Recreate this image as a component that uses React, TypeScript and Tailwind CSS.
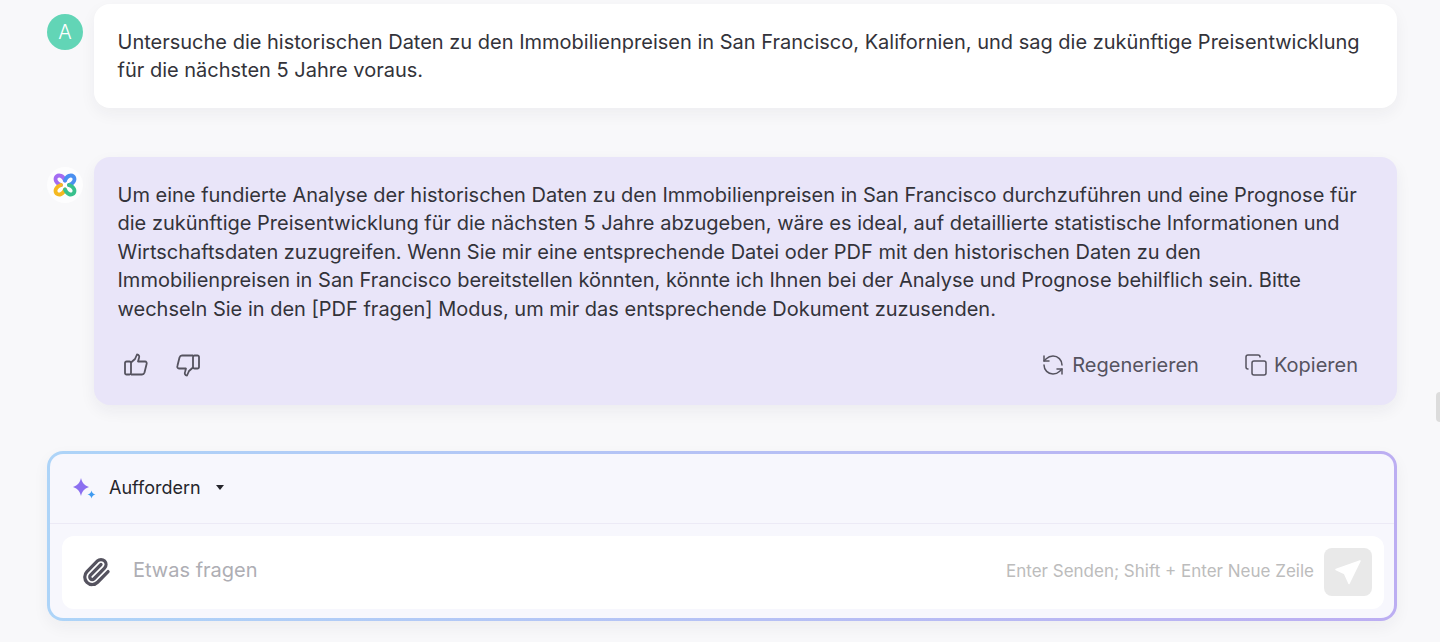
import { Copy, Paperclip, RefreshCcw } from "lucide-react";

function LogoMark() {
  return (
    <svg width="24" height="24" viewBox="0 0 24 24" fill="none" strokeWidth="3.8" strokeLinecap="round">
      <path d="M8 12 C2.5 10 1.5 6 3.5 3.5 C6 1.5 10 2.5 12 7.5" stroke="#a36cf2" />
      <path d="M12 7.5 C14 2.5 18 1.5 20.5 3.5 C22.5 6 21.5 10 16 12" stroke="#4a8ff0" />
      <path d="M8 12 C2.5 14 1.5 18 3.5 20.5 C6 22.5 10 21.5 12 16.5" stroke="#f5b921" />
      <path d="M16 12 C21.5 14 22.5 18 20.5 20.5 C18 22.5 14 21.5 12 16.5" stroke="#38c08c" />
    </svg>
  );
}

function Sparkles() {
  return (
    <svg width="24" height="24" viewBox="0 0 24 24">
      <path d="M9 2 C10 6.5 12 9.2 17 11 C12 12.8 10 15.5 9 20 C8 15.5 6 12.8 1 11 C6 9.2 8 6.5 9 2Z" fill="#8b6ff0" />
      <path d="M19.5 14.5 C20 16.8 21 17.8 23.5 18.5 C21 19.2 20 20.2 19.5 22.5 C19 20.2 18 19.2 15.5 18.5 C18 17.8 19 16.8 19.5 14.5Z" fill="#3f9bf0" />
    </svg>
  );
}

function SendIcon() {
  return (
    <svg width="28" height="28" viewBox="0 0 28 28">
      <path d="M26 3 L2 11.5 L10.5 15.5 L15 25.5 Z" fill="#ffffff" stroke="#ffffff" strokeWidth="1.5" strokeLinejoin="round" />
    </svg>
  );
}

function Thumb({ className }: { className?: string }) {
  return (
    <svg width="24" height="24" viewBox="0 0 24 24" fill="none" stroke="currentColor" strokeWidth="1.8" strokeLinejoin="round" className={className}>
      <rect x="1" y="8.5" width="6" height="13" rx="1.5" />
      <path d="M7 9.5 L11 6 L13 1.5 C15 1.5 15.6 3.5 15 5 L14 8.5 H21 C22.5 8.5 23 10 22.6 11 L20.5 19.5 C20 21 19 21.5 18 21.5 H7" />
    </svg>
  );
}

export default function App() {
  return (
    <div className="relative h-[642px] overflow-hidden bg-[#f8f8fa] pl-[47px] pr-[43px] pt-1 font-['Inter',sans-serif] text-[#33333a]">
      {/* question */}
      <div className="flex gap-[11px]">
        <div className="mt-2.5 flex h-9 w-9 shrink-0 items-center justify-center rounded-full bg-[#62d5b6] text-xl font-light text-white">
          A
        </div>
        <div className="h-[104px] flex-1 rounded-2xl bg-white pl-[23.5px] pr-6 pt-[23.5px] text-[20px] leading-[28.4px] shadow-[0_6px_16px_rgba(30,30,60,0.05)]">
          Untersuche die historischen Daten zu den Immobilienpreisen in San Francisco, Kalifornien, und sag die zukünftige Preisentwicklung für die nächsten 5 Jahre voraus.
        </div>
      </div>

      {/* answer */}
      <div className="mt-[49px] flex gap-[11px]">
        <div className="mt-[10px] flex h-9 w-9 shrink-0 items-center justify-center rounded-full bg-white/70">
          <LogoMark />
        </div>
        <div className="h-[248px] flex-1 rounded-2xl bg-[#e9e5f9] pl-[23.5px] pr-6 pt-[23.5px] shadow-[0_6px_16px_rgba(30,30,60,0.06)]">
          <p className="text-[20px] leading-[28.5px]">
            Um eine fundierte Analyse der historischen Daten zu den Immobilienpreisen in San Francisco durchzuführen und eine Prognose für die zukünftige Preisentwicklung für die nächsten 5 Jahre abzugeben, wäre es ideal, auf detaillierte statistische Informationen und Wirtschaftsdaten zuzugreifen. Wenn Sie mir eine entsprechende Datei oder PDF mit den historischen Daten zu den Immobilienpreisen in San Francisco bereitstellen könnten, könnte ich Ihnen bei der Analyse und Prognose behilflich sein. Bitte wechseln Sie in den [PDF fragen] Modus, um mir das entsprechende Dokument zuzusenden.
          </p>
          <div className="mt-[26.5px] flex items-center text-[#55535f]">
            <Thumb className="ml-1.5" />
            <Thumb className="ml-[28px] rotate-180" />
            <div className="ml-auto mr-[15px] flex items-center text-[20px]">
              <RefreshCcw size={24} strokeWidth={1.5} className="mr-[7px]" />
              <span>Regenerieren</span>
              <Copy size={24} strokeWidth={1.5} className="ml-[45px] mr-1.5" />
              <span>Kopieren</span>
            </div>
          </div>
        </div>
      </div>

      {/* input */}
      <div className="mt-[46px] h-[170px] rounded-2xl bg-gradient-to-r from-[#add4f8] to-[#bcaef2] p-[3px] shadow-[0_6px_16px_rgba(30,30,60,0.05)]">
        <div className="flex h-full flex-col rounded-[13px] bg-[#f7f7fd]">
          <div className="flex h-[70px] items-center border-b border-[#eceaf6] pb-0.5 pl-[22px]">
            <Sparkles />
            <span className="ml-[13px] text-lg text-[#25252b]">Auffordern</span>
            <span className="ml-[15px] h-0 w-0 border-x-[4.5px] border-t-[5px] border-x-transparent border-t-[#25252b]" />
          </div>
          <div className="ml-3 mr-[10px] mt-3 flex h-[73px] items-center rounded-xl bg-white pb-px pl-[19px] pr-3">
            <Paperclip size={30} strokeWidth={2.6} className="text-[#55535f]" />
            <span className="mb-1 ml-[22px] text-[20px] text-[#aeaeb4]">Etwas fragen</span>
            <span className="ml-auto text-[17px] text-[#bcbcbc]">Enter Senden; Shift + Enter Neue Zeile</span>
            <div className="ml-[10px] flex h-12 w-12 items-center justify-center rounded-lg bg-[#e9e9e9]">
              <SendIcon />
            </div>
          </div>
        </div>
      </div>

      {/* scrollbar thumb */}
      <div className="absolute right-0 top-[392px] h-[30px] w-1 rounded-l bg-[#dcdcdc]" />
    </div>
  );
}
